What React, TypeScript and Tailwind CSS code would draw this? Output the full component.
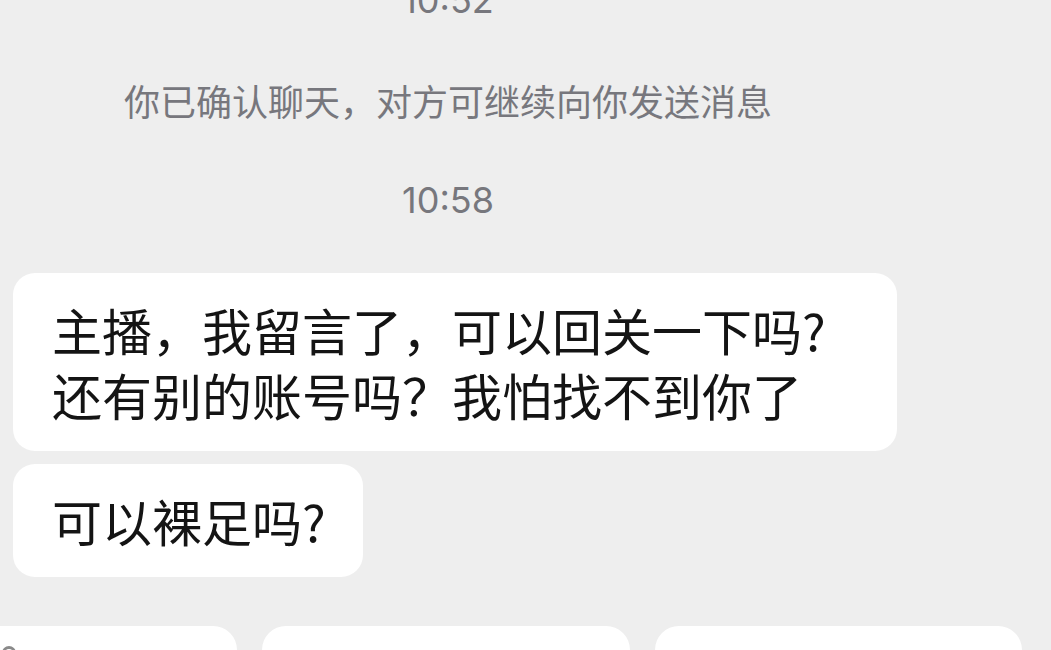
import React from "react";

const cjk = { fontFamily: '"Noto Sans CJK SC", "Noto Sans", sans-serif' };
const num = { fontFamily: 'Inter, "Noto Sans CJK SC", sans-serif' };

const Time = ({ text, className = "" }: { text: string; className?: string }) => (
  <div
    className={`text-[36px] leading-[40px] text-[#77777d] ${className}`}
    style={num}
  >
    {text}
  </div>
);

const Bubble = ({
  lines,
  className = "",
}: {
  lines: string[];
  className?: string;
}) => (
  <div
    className={`ml-[13px] rounded-[22px] bg-white pl-[39px] pr-[37px] py-[24px] text-[50px] leading-[65px] text-[#141414] ${className}`}
    style={cjk}
  >
    {lines.map((l, i) => (
      <div key={i} className="whitespace-nowrap">
        {l}
      </div>
    ))}
  </div>
);

export default function App() {
  return (
    <div className="h-[650px] w-[1051px] overflow-hidden bg-[#eeeeee]">
      <div className="flex w-[896px] flex-col">
        <div className="flex flex-col items-center">
          <Time text="10:52" className="mt-[-20px]" />
          <div
            className="mt-[58px] text-[36px] leading-[44px] text-[#77777d] whitespace-nowrap"
            style={cjk}
          >
            你已确认聊天，对方可继续向你发送消息
          </div>
          <Time text="10:58" className="mt-[58px]" />
        </div>

        <Bubble
          className="mt-[53px] w-[884px]"
          lines={["主播，我留言了，可以回关一下吗?", "还有别的账号吗？我怕找不到你了"]}
        />
        <Bubble className="mt-[13px] w-fit" lines={["可以裸足吗?"]} />
      </div>

      {/* quick reply chips, cut off by the bottom edge */}
      <div className="mt-[49px] flex gap-[25px]">
        <div className="ml-[-23px] h-[60px] w-[260px] shrink-0 rounded-[24px] bg-white pl-[25px] pt-[20px]">
          <div className="h-[14px] w-[14px] rounded-full border-[3px] border-[#8a8a8a]" />
        </div>
        <div className="h-[60px] w-[368px] shrink-0 rounded-[24px] bg-white" />
        <div className="h-[60px] w-[367px] shrink-0 rounded-[24px] bg-white" />
      </div>
    </div>
  );
}
